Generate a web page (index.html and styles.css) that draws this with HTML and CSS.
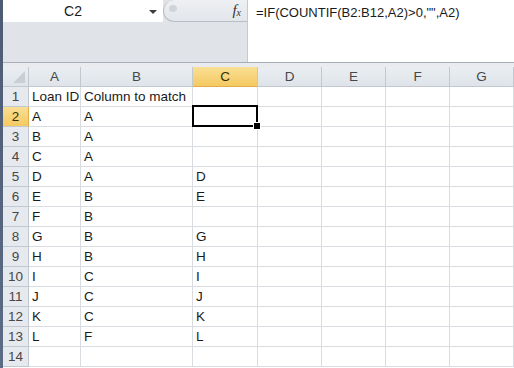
FILE: index.html
```html
<html>
<head>
    <title>Book1 - Sheet1</title>
    <meta charset="UTF-8">
    <link rel="stylesheet" href="styles.css">
</head>
<body>
    <div class="window">
        <div class="edge"></div>
        <div class="main">
            <div class="top">
                <div class="left">
                    <div class="namebar">
                        <div class="namebox">C2</div>
                        <div class="drop"><span class="arrow"></span></div>
                        <div class="capsule">
                            <span class="knob"></span>
                            <span class="fx">f<sub>x</sub></span>
                        </div>
                    </div>
                </div>
                <div class="formula">=IF(COUNTIF(B2:B12,A2)&gt;0,"",A2)</div>
            </div>
            <div class="band"></div>
            <div class="sheet">
                <div class="hd corner"><span class="tri"></span></div>
                <div class="hd">A</div>
                <div class="hd">B</div>
                <div class="hd on">C</div>
                <div class="hd">D</div>
                <div class="hd">E</div>
                <div class="hd">F</div>
                <div class="hd">G</div>

                <div class="rh">1</div><div class="cell">Loan ID</div><div class="cell">Column to match</div><div class="cell"></div><div class="cell"></div><div class="cell"></div><div class="cell"></div><div class="cell"></div>
                <div class="rh on">2</div><div class="cell">A</div><div class="cell">A</div><div class="cell active"></div><div class="cell"></div><div class="cell"></div><div class="cell"></div><div class="cell"></div>
                <div class="rh">3</div><div class="cell">B</div><div class="cell">A</div><div class="cell"></div><div class="cell"></div><div class="cell"></div><div class="cell"></div><div class="cell"></div>
                <div class="rh">4</div><div class="cell">C</div><div class="cell">A</div><div class="cell"></div><div class="cell"></div><div class="cell"></div><div class="cell"></div><div class="cell"></div>
                <div class="rh">5</div><div class="cell">D</div><div class="cell">A</div><div class="cell">D</div><div class="cell"></div><div class="cell"></div><div class="cell"></div><div class="cell"></div>
                <div class="rh">6</div><div class="cell">E</div><div class="cell">B</div><div class="cell">E</div><div class="cell"></div><div class="cell"></div><div class="cell"></div><div class="cell"></div>
                <div class="rh">7</div><div class="cell">F</div><div class="cell">B</div><div class="cell"></div><div class="cell"></div><div class="cell"></div><div class="cell"></div><div class="cell"></div>
                <div class="rh">8</div><div class="cell">G</div><div class="cell">B</div><div class="cell">G</div><div class="cell"></div><div class="cell"></div><div class="cell"></div><div class="cell"></div>
                <div class="rh">9</div><div class="cell">H</div><div class="cell">B</div><div class="cell">H</div><div class="cell"></div><div class="cell"></div><div class="cell"></div><div class="cell"></div>
                <div class="rh">10</div><div class="cell">I</div><div class="cell">C</div><div class="cell">I</div><div class="cell"></div><div class="cell"></div><div class="cell"></div><div class="cell"></div>
                <div class="rh">11</div><div class="cell">J</div><div class="cell">C</div><div class="cell">J</div><div class="cell"></div><div class="cell"></div><div class="cell"></div><div class="cell"></div>
                <div class="rh">12</div><div class="cell">K</div><div class="cell">C</div><div class="cell">K</div><div class="cell"></div><div class="cell"></div><div class="cell"></div><div class="cell"></div>
                <div class="rh">13</div><div class="cell">L</div><div class="cell">F</div><div class="cell">L</div><div class="cell"></div><div class="cell"></div><div class="cell"></div><div class="cell"></div>
                <div class="rh">14</div><div class="cell"></div><div class="cell"></div><div class="cell"></div><div class="cell"></div><div class="cell"></div><div class="cell"></div><div class="cell"></div>
            </div>
        </div>
    </div>
</body>
</html>
```

FILE: styles.css
```css
body {
    margin: 0;
    font-family: "Liberation Sans", Arial, sans-serif;
    color: #1a1a1a;
    background: #ffffff;
}

.window {
    display: flex;
    width: 514px;
    height: 368px;
    overflow: hidden;
}

.edge {
    width: 3px;
    background: linear-gradient(#4d5b73, #5d6c86);
}

.main {
    flex: 1;
    display: flex;
    flex-direction: column;
}

/* formula bar */
.top {
    display: flex;
    height: 62px;
    background: #e0e4e9;
    border-bottom: 1px solid #a9afb7;
}

.left {
    width: 244px;
}

.namebar {
    display: flex;
    height: 22px;
}

.namebox {
    width: 140px;
    background: #ffffff;
    text-align: center;
    font-size: 14px;
    line-height: 22px;
}

.drop {
    width: 20px;
    background: #ffffff;
    display: flex;
    align-items: center;
    justify-content: center;
}

    .drop .arrow {
        width: 0;
        height: 0;
        border-left: 4px solid transparent;
        border-right: 4px solid transparent;
        border-top: 4px solid #3c3c3c;
        margin-top: 2px;
    }

.capsule {
    flex: 1;
    display: flex;
    align-items: center;
    justify-content: space-between;
    background: linear-gradient(#eef0f3, #e2e5e9);
    border: 1px solid #b9bec5;
    border-right: none;
    border-top: none;
    border-radius: 12px 0 0 12px;
    padding: 0 6px 0 5px;
    box-sizing: border-box;
}

    .capsule .knob {
        width: 8px;
        height: 7px;
        border-radius: 50%;
        background: #cfd4da;
        margin-top: -4px;
    }

.fx {
    font-family: "Liberation Serif", "Times New Roman", serif;
    font-style: italic;
    font-size: 15px;
    color: #333333;
}

    .fx sub {
        font-size: 10px;
        vertical-align: -1px;
    }

.formula {
    flex: 1;
    background: #ffffff;
    border-left: 1px solid #c5cad0;
    padding: 3px 0 0 8px;
    font-size: 13px;
    line-height: 20px;
    white-space: nowrap;
}

.band {
    height: 4px;
    background: #e9ebee;
}

/* grid */
.sheet {
    display: grid;
    grid-template-columns: 26px 52px 112px 65px 64px 64px 64px 64px;
    grid-auto-rows: 20px;
}

.hd, .rh {
    background: linear-gradient(#eaeef3, #dfe4ea);
    border-right: 1px solid #c2c8d0;
    border-bottom: 1px solid #c2c8d0;
    box-sizing: border-box;
    color: #474747;
    font-size: 13.5px;
    line-height: 19px;
    text-align: center;
}

.rh {
    background: #e6eaef;
}

.hd.on, .rh.on {
    background: linear-gradient(#f9df94, #f4c961);
    border-bottom-color: #e2ad48;
    color: #3a3000;
}

.rh.on {
    border-bottom-color: #c2c8d0;
    border-right-color: #e2ad48;
}

.corner {
    position: relative;
}

    .corner .tri {
        position: absolute;
        right: 3px;
        bottom: 3px;
        width: 0;
        height: 0;
        border-left: 12px solid transparent;
        border-bottom: 12px solid #c9ced5;
    }

.cell {
    border-right: 1px solid #d9dce0;
    border-bottom: 1px solid #d9dce0;
    box-sizing: border-box;
    font-size: 13.5px;
    line-height: 20px;
    padding-left: 3px;
    white-space: nowrap;
}

.active {
    position: relative;
}

    .active::after {
        content: "";
        position: absolute;
        left: -1px;
        top: -2px;
        right: -1px;
        bottom: -1px;
        border: 2px solid #000000;
    }

    .active::before {
        content: "";
        position: absolute;
        right: -4px;
        bottom: -4px;
        width: 6px;
        height: 6px;
        background: #000000;
        border: 1px solid #ffffff;
        z-index: 1;
    }
```
